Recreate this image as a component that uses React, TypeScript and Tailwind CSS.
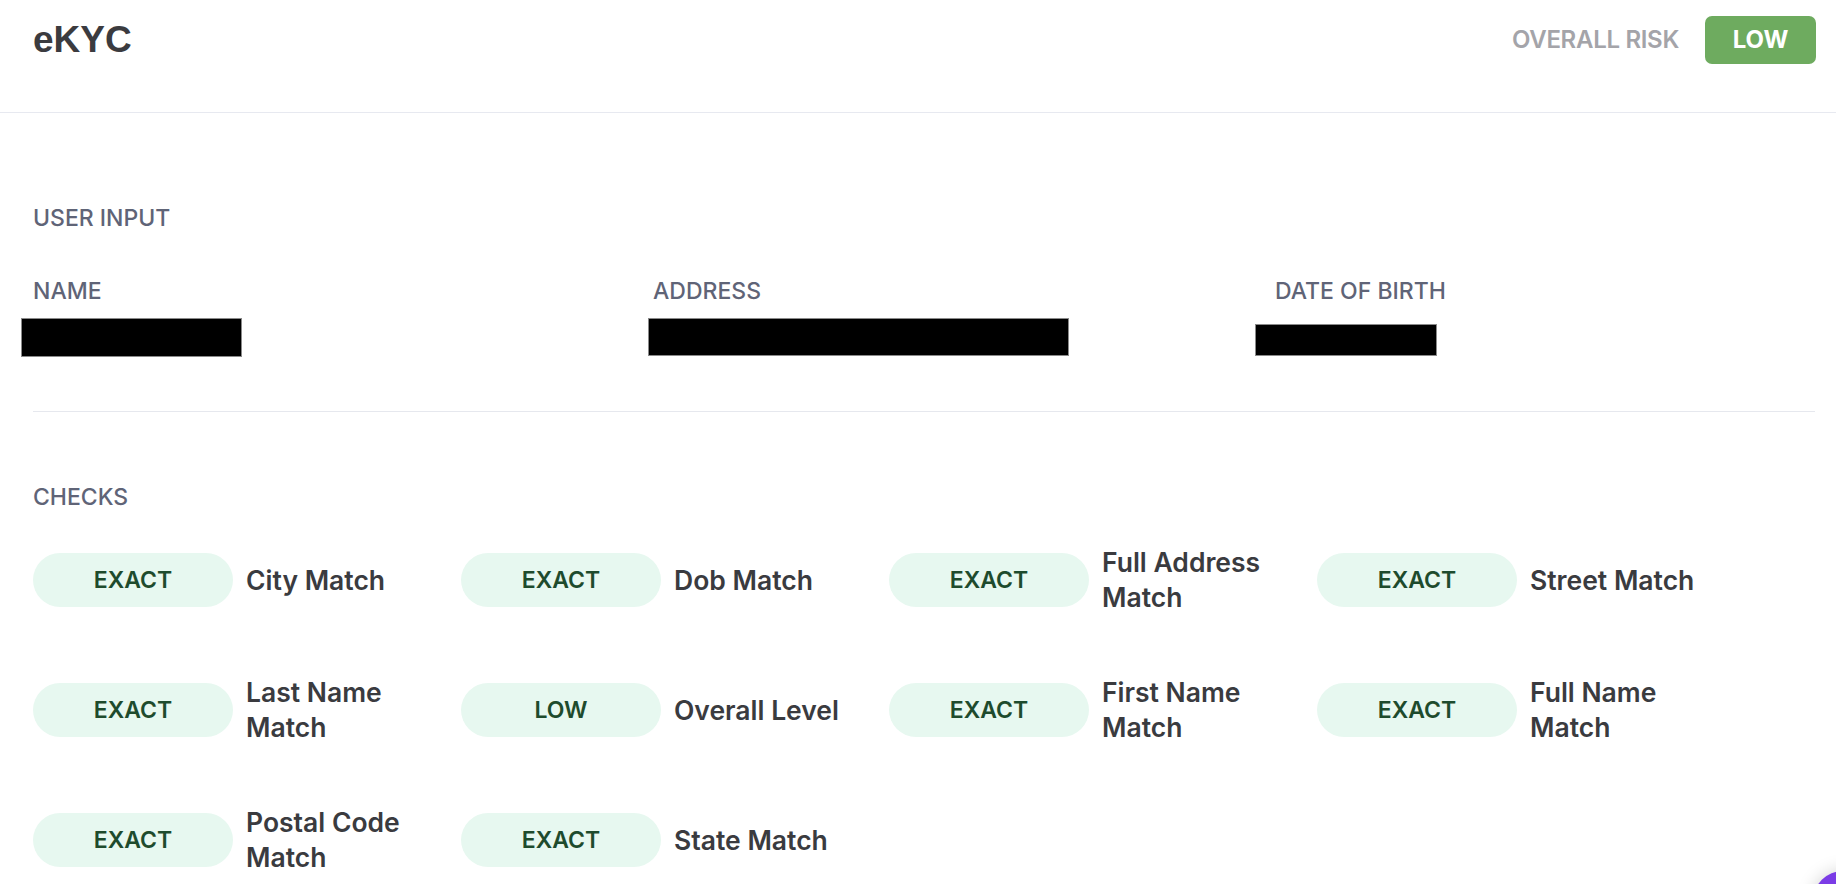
import React from "react";

type Check = { level: string; label: string };

const checks: Check[] = [
  { level: "EXACT", label: "City Match" },
  { level: "EXACT", label: "Dob Match" },
  { level: "EXACT", label: "Full Address Match" },
  { level: "EXACT", label: "Street Match" },
  { level: "EXACT", label: "Last Name Match" },
  { level: "LOW", label: "Overall Level" },
  { level: "EXACT", label: "First Name Match" },
  { level: "EXACT", label: "Full Name Match" },
  { level: "EXACT", label: "Postal Code Match" },
  { level: "EXACT", label: "State Match" },
];

export default function App() {
  return (
    <div className="relative min-h-screen bg-white font-['Inter','Liberation_Sans',sans-serif]">
      {/* header */}
      <header className="h-[113px] border-b border-[#e7e9f0] flex items-start justify-between pl-[33px] pr-[20px] pt-[16px]">
        <h1 className="font-['Liberation_Sans',Arial,sans-serif] text-[37px] font-bold leading-[48px] text-[#3b3b3f]">
          eKYC
        </h1>
        <div className="flex items-center gap-[26px] h-[48px]">
          <span className="text-[24px] font-semibold text-[#a4a4a9] tracking-[-0.3px]">OVERALL RISK</span>
          <span className="w-[111px] h-[48px] rounded-[7px] bg-[#6eab5f] text-white text-[24px] font-bold flex items-center justify-center">
            LOW
          </span>
        </div>
      </header>

      <main className="pl-[33px] pr-[21px]">
        {/* user input */}
        <section className="pt-[91px]">
          <h2 className="text-[23px] font-medium leading-[28px] text-[#5f6477]">USER INPUT</h2>
          <div className="grid grid-cols-[620px_622px_1fr] mt-[45px]">
            <div>
              <div className="text-[23px] font-medium leading-[28px] text-[#5f6477]">NAME</div>
              <div className="mt-[13px] -ml-[12px] w-[221px] h-[39px] bg-black border border-[#8a8a8a]" />
            </div>
            <div>
              <div className="text-[23px] font-medium leading-[28px] text-[#5f6477]">ADDRESS</div>
              <div className="mt-[13px] -ml-[5px] w-[421px] h-[38px] bg-black border border-[#8a8a8a]" />
            </div>
            <div>
              <div className="text-[23px] font-medium leading-[28px] text-[#5f6477]">DATE OF BIRTH</div>
              <div className="mt-[19px] -ml-[20px] w-[182px] h-[32px] bg-black border border-[#8a8a8a]" />
            </div>
          </div>
        </section>

        <div className="mt-[54px] border-t border-[#e6e8ee]" />

        {/* checks */}
        <section className="pt-[71px] pb-[40px]">
          <h2 className="text-[23px] font-medium leading-[28px] text-[#5f6477]">CHECKS</h2>
          <div className="grid grid-cols-[repeat(4,428px)] gap-y-[60px] mt-[34px]">
            {checks.map((c) => (
              <div key={c.label} className="flex items-center gap-[13px] h-[70px]">
                <span className="shrink-0 w-[200px] h-[54px] rounded-full bg-[#e7f8f0] text-[#1e4b2d] text-[23px] font-semibold flex items-center justify-center">
                  {c.level}
                </span>
                <span className="max-w-[200px] text-[26.5px] font-semibold leading-[35px] text-[#3a3b3f]">
                  {c.label}
                </span>
              </div>
            ))}
          </div>
        </section>
      </main>

      {/* chat launcher, mostly off-screen */}
      <div className="fixed left-[1813px] top-[871px] w-[60px] h-[60px] rounded-full bg-[#7b3ce6] shadow-[0_0_18px_rgba(0,0,0,0.18)]" />
    </div>
  );
}
